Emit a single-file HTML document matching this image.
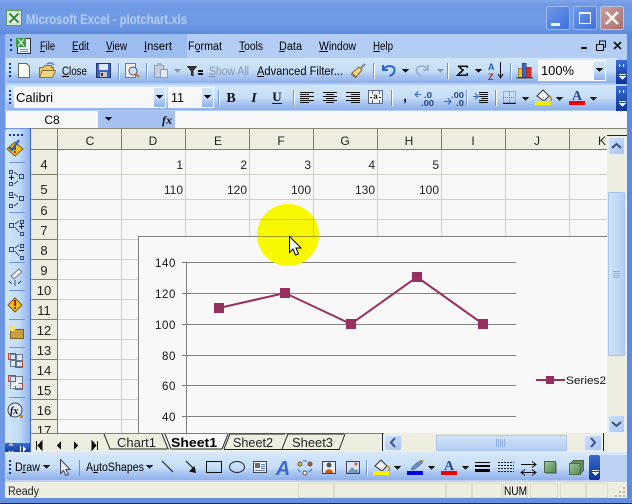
<!DOCTYPE html>
<html><head><meta charset="utf-8">
<style>
html,body{margin:0;padding:0;width:632px;height:504px;overflow:hidden;background:#3a6bd8}
svg{display:block}
text{font-family:"Liberation Sans",sans-serif;font-size:11px;fill:#000;white-space:pre}
.c{font-size:12px;fill:#222}
.g{font-size:11.5px;fill:#111}
.h{font-size:12px;fill:#222;text-anchor:middle}
.r{font-size:13px;fill:#222;text-anchor:middle}
</style></head>
<body>
<svg width="632" height="504" viewBox="0 0 632 504" xmlns="http://www.w3.org/2000/svg" shape-rendering="crispEdges">
<defs>
<linearGradient id="tb" x1="0" y1="0" x2="0" y2="1"><stop offset="0" stop-color="#d2e6f8"/><stop offset=".5" stop-color="#c6def6"/><stop offset=".72" stop-color="#a9c6f2"/><stop offset="1" stop-color="#8eb0ea"/></linearGradient>
<linearGradient id="title" x1="0" y1="0" x2="0" y2="1"><stop offset="0" stop-color="#7ea4ea"/><stop offset=".15" stop-color="#7099e4"/><stop offset=".7" stop-color="#6f9ae3"/><stop offset="1" stop-color="#5f8bdc"/></linearGradient>
<linearGradient id="lt" x1="0" y1="0" x2="1" y2="0"><stop offset="0" stop-color="#d2e6f8"/><stop offset=".55" stop-color="#c3dcf6"/><stop offset="1" stop-color="#8fb2ec"/></linearGradient>
<linearGradient id="chev" x1="0" y1="0" x2="0" y2="1"><stop offset="0" stop-color="#3a6cd0"/><stop offset="1" stop-color="#0a3496"/></linearGradient>
<linearGradient id="thumb" x1="0" y1="0" x2="0" y2="1"><stop offset="0" stop-color="#d2e6f8"/><stop offset="1" stop-color="#b4ccf4"/></linearGradient>
<linearGradient id="vthumb" x1="0" y1="0" x2="1" y2="0"><stop offset="0" stop-color="#d2e6f8"/><stop offset="1" stop-color="#b4ccf4"/></linearGradient>
<linearGradient id="btn" x1="0" y1="0" x2="1" y2="1"><stop offset="0" stop-color="#cfe0fa"/><stop offset="1" stop-color="#a9c4f2"/></linearGradient>
<linearGradient id="minb" x1="0" y1="0" x2="1" y2="1"><stop offset="0" stop-color="#7098e6"/><stop offset="1" stop-color="#3d6fdc"/></linearGradient>
<linearGradient id="clb" x1="0" y1="0" x2="1" y2="1"><stop offset="0" stop-color="#c9a09a"/><stop offset="1" stop-color="#ab6f6a"/></linearGradient>
<linearGradient id="grn" x1="0" y1="0" x2="1" y2="1"><stop offset="0" stop-color="#9cc79a"/><stop offset="1" stop-color="#4f8a4f"/></linearGradient>
<clipPath id="spot"><circle cx="288" cy="235" r="31"/></clipPath>
<path id="arr" d="M0 0h7l-3.500 4z"/>
</defs>

<!-- window frame -->
<rect width="632" height="504" fill="#3f72dc"/>
<rect x="0" y="0" width="632" height="34" fill="url(#title)"/>
<rect x="0" y="34" width="5" height="470" fill="#6d97e4"/>
<rect x="627" y="34" width="5" height="470" fill="#5c8ae0"/>
<rect x="0" y="498" width="632" height="6" fill="#6490e2"/>
<rect x="0" y="503" width="632" height="1" fill="#2a2a3a"/>

<!-- title -->
<rect x="6.500" y="10.500" width="15" height="15" fill="#d6e3d0" stroke="#5c9a5c"/>
<rect x="9" y="13" width="10" height="10" fill="#f4f8f0"/>
<path d="M9.500 13.500l9 9M18.500 13.500l-9 9" stroke="#2a8a3a" stroke-width="2" fill="none" shape-rendering="auto"/>
<text x="26" y="24" textLength="161" lengthAdjust="spacingAndGlyphs" style="font-size:13.500px;font-weight:bold;fill:#b5cef5">Microsoft Excel - plotchart.xls</text>

<!-- window buttons -->
<rect x="546.500" y="6.500" width="23" height="23" rx="2" fill="url(#minb)" stroke="#9cb9ee"/>
<rect x="551" y="23" width="9" height="3" fill="#eef4ff"/>
<rect x="573.500" y="6.500" width="23" height="23" rx="2" fill="url(#minb)" stroke="#9cb9ee"/>
<rect x="579.500" y="12.500" width="11" height="11" fill="none" stroke="#eef4ff"/>
<rect x="579" y="12" width="12" height="2" fill="#eef4ff"/>
<rect x="600.500" y="6.500" width="23" height="23" rx="2" fill="url(#clb)" stroke="#b9c5e6"/>
<path d="M606 12l12 12M618 12l-12 12" stroke="#f4f4f4" stroke-width="2.600" fill="none" shape-rendering="auto"/>

<!-- menu bar -->
<rect x="5" y="34" width="622" height="24" fill="#b4cdf5"/>
<rect x="5" y="34" width="182" height="24" fill="#9dbcf0"/>
<g fill="#0b3a9a"><rect x="10" y="39" width="2" height="2"/><rect x="10" y="44" width="2" height="2"/><rect x="10" y="49" width="2" height="2"/></g>
<path d="M17.500 38.500h13v15h-13z" fill="#e8eefa" stroke="#333"/><rect x="16" y="38" width="10" height="9" fill="#3d9a44"/>
<path d="M18 39l6 7m0-7l-6 7" stroke="#fff" fill="none" shape-rendering="auto"/>
<path d="M20 49.500h8M20 51.500h8" stroke="#7a8aa8"/>
<text x="40" y="50" textLength="15" lengthAdjust="spacingAndGlyphs" style="font-size:11.500px">File</text><rect x="40" y="51" width="5" height="1"/>
<text x="72" y="50" textLength="17" lengthAdjust="spacingAndGlyphs" style="font-size:11.500px">Edit</text><rect x="72" y="51" width="6" height="1"/>
<text x="106" y="50" textLength="21" lengthAdjust="spacingAndGlyphs" style="font-size:11.500px">View</text><rect x="106" y="51" width="7" height="1"/>
<text x="144" y="50" textLength="28" lengthAdjust="spacingAndGlyphs" style="font-size:11.500px">Insert</text><rect x="144" y="51" width="3" height="1"/>
<text x="188" y="50" textLength="34" lengthAdjust="spacingAndGlyphs" style="font-size:11.500px">Format</text><rect x="196" y="51" width="4" height="1"/>
<text x="239" y="50" textLength="24" lengthAdjust="spacingAndGlyphs" style="font-size:11.500px">Tools</text><rect x="239" y="51" width="6" height="1"/>
<text x="279" y="50" textLength="23" lengthAdjust="spacingAndGlyphs" style="font-size:11.500px">Data</text><rect x="279" y="51" width="6" height="1"/>
<text x="319" y="50" textLength="37" lengthAdjust="spacingAndGlyphs" style="font-size:11.500px">Window</text><rect x="319" y="51" width="9" height="1"/>
<text x="373" y="50" textLength="20" lengthAdjust="spacingAndGlyphs" style="font-size:11.500px">Help</text><rect x="373" y="51" width="7" height="1"/>
<rect x="581" y="47" width="6" height="2" fill="#111"/>
<path d="M596.500 44.500h7v6h-7zM599.500 44v-3h6v6h-2" fill="none" stroke="#111"/>
<path d="M614 42l7 7M621 42l-7 7" stroke="#111" stroke-width="1.600" fill="none" shape-rendering="auto"/>

<!-- toolbar 1 -->
<rect x="5" y="58" width="622" height="26" fill="#b4cdf5"/>
<rect x="6" y="58" width="612" height="25" rx="3" fill="url(#tb)"/>
<g fill="#0b3a9a"><rect x="9" y="63" width="2" height="2"/><rect x="9" y="67" width="2" height="2"/><rect x="9" y="71" width="2" height="2"/><rect x="9" y="75" width="2" height="2"/></g>
<!-- new -->
<path d="M18.500 63.500h8l3 3v11h-11z" fill="#fbfbf2" stroke="#6a6a5a"/>
<!-- open -->
<path d="M39.500 77.500v-10h4l1-2h7v2h2v3" fill="#e8c66a" stroke="#8a7030"/>
<path d="M39.500 77.500l3-7h13l-3 7z" fill="#f3d682" stroke="#8a7030"/>
<path d="M47 64c3-2 5-1 7 1" stroke="#4a78c8" fill="none" stroke-width="1.400" shape-rendering="auto"/>
<text x="62" y="75" textLength="25" lengthAdjust="spacingAndGlyphs" style="font-size:11.500px">Close</text><rect x="62" y="76" width="7" height="1"/>
<!-- save -->
<rect x="96.500" y="63.500" width="14" height="14" fill="#3e62c0" stroke="#23357a"/>
<rect x="99" y="64" width="9" height="6" fill="#dfe8f5"/>
<rect x="100" y="72" width="7" height="5" fill="#c8c8c8"/><rect x="101" y="73" width="2" height="3" fill="#333"/>
<rect x="118" y="63" width="1" height="16" fill="#6f93d4"/><rect x="119" y="63" width="1" height="16" fill="#fff"/>
<!-- preview -->
<path d="M125.500 63.500h10v14h-10z" fill="#f4f4ee" stroke="#7a7a70"/>
<circle cx="133" cy="71" r="4" fill="#cfe2f5" stroke="#556" shape-rendering="auto"/>
<path d="M136 74l3 3" stroke="#c8721a" stroke-width="2" shape-rendering="auto"/>
<rect x="146" y="63" width="1" height="16" fill="#6f93d4"/><rect x="147" y="63" width="1" height="16" fill="#fff"/>
<!-- paste grey -->
<path d="M154.500 65.500h9v12h-9z" fill="#c4d0de" stroke="#8c9cb4"/>
<rect x="157" y="63" width="5" height="3" fill="#a9b6c8"/>
<path d="M160.500 69.500h7v8h-7z" fill="#e2e8f0" stroke="#8c9cb4"/>
<use href="#arr" x="174" y="69" fill="#8a97ac"/>
<!-- filter -->
<path d="M187 66h10l-4 5v5l-2-1v-4z" fill="#333" stroke="#222" stroke-width=".5"/>
<rect x="198" y="70" width="5" height="2" fill="#111"/><rect x="198" y="73" width="5" height="2" fill="#111"/>
<text x="209" y="75" textLength="40" lengthAdjust="spacingAndGlyphs" style="font-size:11.500px;fill:#8494ac">Show All</text><rect x="209" y="76" width="6" height="1" fill="#8494ac"/>
<text x="257" y="75" textLength="86" lengthAdjust="spacingAndGlyphs" style="font-size:11.500px">Advanced Filter...</text><rect x="257" y="76" width="7" height="1"/>
<!-- brush -->
<path d="M352 73l7-6 3 3-6 7z" fill="#f0d890" stroke="#8a6a20" shape-rendering="auto"/>
<path d="M361 68l4-4" stroke="#7a8aa0" stroke-width="2.200" shape-rendering="auto"/>
<path d="M351 74l5 4" stroke="#8a6a20" shape-rendering="auto"/>
<rect x="373" y="63" width="1" height="16" fill="#6f93d4"/><rect x="374" y="63" width="1" height="16" fill="#fff"/>
<!-- undo -->
<path d="M383 65v5h5M383.500 69c3-4 11-4 11 1 0 3-2 5-5 6" fill="none" stroke="#2a64c8" stroke-width="2" shape-rendering="auto"/>
<use href="#arr" x="402" y="69" fill="#111"/>
<path d="M428 65v5h-5M427.500 69c-3-4-11-4-11 1 0 3 2 5 5 6" fill="none" stroke="#9fb4cf" stroke-width="2" shape-rendering="auto"/>
<use href="#arr" x="437" y="69" fill="#8a97ac"/>
<rect x="447" y="63" width="1" height="16" fill="#6f93d4"/><rect x="448" y="63" width="1" height="16" fill="#fff"/>
<!-- sigma -->
<path d="M458 66h9v2M458 66l5 4-5 5h9v-2" fill="none" stroke="#111" stroke-width="1.500"/>
<use href="#arr" x="475" y="69" fill="#111"/>
<!-- AZ -->
<text x="488" y="70" style="font-size:9px;font-weight:bold;fill:#2a5ab8">A</text>
<text x="488" y="80" style="font-size:9px;font-weight:bold;fill:#a03030">Z</text>
<path d="M500.500 62v15M498 74l2.500 4 2.500-4" stroke="#111" fill="none"/>
<rect x="510" y="63" width="1" height="16" fill="#6f93d4"/><rect x="511" y="63" width="1" height="16" fill="#fff"/>
<!-- chart icon -->
<rect x="518" y="68" width="4" height="9" fill="#e8c020" stroke="#444" stroke-width=".5"/>
<rect x="522" y="63" width="4" height="14" fill="#3a64c8" stroke="#334" stroke-width=".5"/>
<rect x="526" y="67" width="5" height="10" fill="#d03030" stroke="#444" stroke-width=".5"/>
<path d="M516 78h17" stroke="#444"/>
<!-- zoom combo -->
<rect x="538" y="60" width="67" height="21" fill="#f7f7f7"/>
<rect x="593" y="61" width="12" height="19" fill="url(#tb)"/>
<rect x="593.500" y="60.500" width="12" height="20" fill="none" stroke="#fff"/>
<use href="#arr" x="596" y="68" fill="#000"/>
<text x="541" y="75" textLength="33" lengthAdjust="spacingAndGlyphs" style="font-size:13px">100%</text>
<!-- chevron 1 -->
<rect x="616" y="60" width="11" height="24" fill="url(#chev)"/>
<path d="M619 64l2 1.500-2 1.500zM623 64l2 1.500-2 1.500z" fill="#fff"/><rect x="619" y="74" width="7" height="1" fill="#fff"/><use href="#arr" x="619" y="76" fill="#fff"/>

<!-- toolbar 2 -->
<rect x="5" y="84" width="622" height="27" fill="#b4cdf5"/>
<rect x="6" y="85" width="612" height="25" rx="3" fill="url(#tb)"/>
<g fill="#0b3a9a"><rect x="9" y="90" width="2" height="2"/><rect x="9" y="94" width="2" height="2"/><rect x="9" y="98" width="2" height="2"/><rect x="9" y="102" width="2" height="2"/></g>
<rect x="14" y="87" width="152" height="21" fill="#f7f7f7"/>
<rect x="153" y="88" width="12" height="19" fill="url(#tb)"/>
<rect x="153.500" y="87.500" width="12" height="20" fill="none" stroke="#fff"/>
<use href="#arr" x="156" y="95" fill="#000"/>
<text x="16" y="102" textLength="37" lengthAdjust="spacingAndGlyphs" style="font-size:12.500px">Calibri</text>
<rect x="168" y="87" width="46" height="21" fill="#f7f7f7"/>
<rect x="201" y="88" width="12" height="19" fill="url(#tb)"/>
<rect x="201.500" y="87.500" width="12" height="20" fill="none" stroke="#fff"/>
<use href="#arr" x="204" y="95" fill="#000"/>
<text x="171" y="102" textLength="13" lengthAdjust="spacingAndGlyphs" style="font-size:12.500px">11</text>
<rect x="218" y="90" width="1" height="16" fill="#6f93d4"/><rect x="219" y="90" width="1" height="16" fill="#fff"/>
<text x="231" y="102" text-anchor="middle" style="font-family:'Liberation Serif',serif;font-size:14px;font-weight:bold;fill:#111">B</text>
<text x="254" y="102" text-anchor="middle" style="font-family:'Liberation Serif',serif;font-size:14px;font-style:italic;font-weight:bold;fill:#111">I</text>
<text x="277" y="101" text-anchor="middle" style="font-family:'Liberation Serif',serif;font-size:13px;font-weight:bold;fill:#111">U</text><rect x="272" y="103" width="10" height="1" fill="#111"/>
<rect x="293" y="90" width="1" height="16" fill="#6f93d4"/><rect x="294" y="90" width="1" height="16" fill="#fff"/>
<path d="M300 92.500h14M300 94.500h9M300 96.500h14M300 98.500h9M300 100.500h14M300 102.500h9" stroke="#111"/>
<path d="M323 92.500h14M326 94.500h8M323 96.500h14M326 98.500h8M323 100.500h14M326 102.500h8" stroke="#111"/>
<path d="M346 92.500h14M351 94.500h9M346 96.500h14M351 98.500h9M346 100.500h14M351 102.500h9" stroke="#111"/>
<rect x="368.500" y="90.500" width="14" height="13" fill="#e9eef6" stroke="#5a6a80"/>
<rect x="369" y="94" width="13" height="6" fill="#fff"/>
<path d="M372.500 90v4M379.500 90v4M372.500 100v4M379.500 100v4" stroke="#5a6a80"/>
<text x="375.500" y="99" text-anchor="middle" style="font-size:8px;font-weight:bold;fill:#111">a</text>
<path d="M370 97.500h2M379 97.500h2" stroke="#111"/>
<rect x="391" y="90" width="1" height="16" fill="#6f93d4"/><rect x="392" y="90" width="1" height="16" fill="#fff"/>
<text x="405" y="101" text-anchor="middle" style="font-size:14px;font-weight:bold;fill:#111">,</text>
<!-- decimals -->
<text x="424" y="98" textLength="8" lengthAdjust="spacingAndGlyphs" style="font-size:8.500px;font-weight:bold;fill:#26447a">.0</text>
<text x="421" y="106" textLength="13" lengthAdjust="spacingAndGlyphs" style="font-size:8.500px;font-weight:bold;fill:#26447a">.00</text>
<path d="M421 94.500h-6M418 91.500l-3 3 3 3" stroke="#2f6ac8" fill="none" stroke-width="1.400"/>
<text x="451" y="98" textLength="13" lengthAdjust="spacingAndGlyphs" style="font-size:8.500px;font-weight:bold;fill:#26447a">.00</text>
<text x="456" y="106" textLength="8" lengthAdjust="spacingAndGlyphs" style="font-size:8.500px;font-weight:bold;fill:#26447a">.0</text>
<path d="M444 101.500h7M448 98.500l3 3-3 3" stroke="#2f6ac8" fill="none" stroke-width="1.400"/>
<rect x="466" y="90" width="1" height="16" fill="#6f93d4"/><rect x="467" y="90" width="1" height="16" fill="#fff"/>
<path d="M479 92.500h9M479 94.500h9M479 96.500h9M481 98.500h7M479 100.500h9M479 102.500h9" stroke="#111"/>
<path d="M473 96.500h5M475 93.500l3 3-3 3" stroke="#2f6ac8" fill="none" stroke-width="1.300"/>
<rect x="495" y="90" width="1" height="16" fill="#6f93d4"/><rect x="496" y="90" width="1" height="16" fill="#fff"/>
<path d="M503.500 91.500h12v11h-12zM509.500 91v11M503 97.500h12" fill="none" stroke="#6a7a90" stroke-dasharray="1 1"/>
<rect x="503" y="103" width="13" height="1" fill="#111"/>
<use href="#arr" x="522" y="97" fill="#111"/>
<!-- fill -->
<path d="M537 96l6-6 6 6-5 5z" fill="#f6f6f6" stroke="#333" shape-rendering="auto"/>
<path d="M549 96c2 1 3 3 2 5" stroke="#c09020" stroke-width="1.600" fill="none" shape-rendering="auto"/>
<rect x="535" y="101" width="16" height="4" fill="#f8f000"/>
<use href="#arr" x="556" y="97" fill="#111"/>
<!-- font color -->
<text x="577" y="100" text-anchor="middle" style="font-family:'Liberation Serif',serif;font-size:14px;font-weight:bold;fill:#26488c">A</text>
<rect x="569" y="101" width="16" height="4" fill="#f00000"/>
<use href="#arr" x="590" y="97" fill="#111"/>
<rect x="616" y="86" width="11" height="25" fill="url(#chev)"/>
<path d="M619 90l2 1.500-2 1.500zM623 90l2 1.500-2 1.500z" fill="#fff"/><rect x="619" y="101" width="7" height="1" fill="#fff"/><use href="#arr" x="619" y="103" fill="#fff"/>

<!-- name box row -->
<rect x="5" y="111" width="622" height="17" fill="#a5c1f1"/>
<rect x="6" y="111" width="92" height="17" fill="#f8f8f8"/>
<text x="52" y="124" text-anchor="middle" style="font-size:12px">C8</text>
<use href="#arr" x="105" y="117" fill="#111"/>
<text x="162" y="124" style="font-family:'Liberation Serif',serif;font-size:12px;font-style:italic;font-weight:bold;fill:#111">fx</text>
<rect x="175" y="111" width="452" height="17" fill="#f8f8f8"/>

<!-- sheet -->
<rect x="31" y="128" width="576" height="305" fill="#f8f8f8"/>
<rect x="31" y="128" width="596" height="1" fill="#8a8674"/>
<rect x="31" y="129" width="576" height="20" fill="#eeeee0"/>
<rect x="31" y="129" width="26" height="304" fill="#eeeee0"/>
<g fill="#7d7d66">
<rect x="31" y="149" width="576" height="1"/>
<rect x="57" y="129" width="1" height="304"/>
<rect x="121" y="129" width="1" height="20"/><rect x="185" y="129" width="1" height="20"/><rect x="249" y="129" width="1" height="20"/><rect x="313" y="129" width="1" height="20"/><rect x="377" y="129" width="1" height="20"/><rect x="441" y="129" width="1" height="20"/><rect x="505" y="129" width="1" height="20"/><rect x="569" y="129" width="1" height="20"/>
<rect x="31" y="174" width="26" height="1"/><rect x="31" y="199" width="26" height="1"/><rect x="31" y="219" width="26" height="1"/><rect x="31" y="239" width="26" height="1"/><rect x="31" y="259" width="26" height="1"/><rect x="31" y="279" width="26" height="1"/><rect x="31" y="299" width="26" height="1"/><rect x="31" y="319" width="26" height="1"/><rect x="31" y="339" width="26" height="1"/><rect x="31" y="359" width="26" height="1"/><rect x="31" y="379" width="26" height="1"/><rect x="31" y="399" width="26" height="1"/><rect x="31" y="419" width="26" height="1"/>
</g>
<g fill="#d0d0c4">
<rect x="58" y="174" width="549" height="1"/><rect x="58" y="199" width="549" height="1"/><rect x="58" y="219" width="549" height="1"/>
<rect x="58" y="239" width="80" height="1"/><rect x="58" y="259" width="80" height="1"/><rect x="58" y="279" width="80" height="1"/><rect x="58" y="299" width="80" height="1"/><rect x="58" y="319" width="80" height="1"/><rect x="58" y="339" width="80" height="1"/><rect x="58" y="359" width="80" height="1"/><rect x="58" y="379" width="80" height="1"/><rect x="58" y="399" width="80" height="1"/><rect x="58" y="419" width="80" height="1"/>
<rect x="121" y="150" width="1" height="283"/>
<rect x="185" y="150" width="1" height="86"/><rect x="249" y="150" width="1" height="86"/><rect x="313" y="150" width="1" height="86"/><rect x="377" y="150" width="1" height="86"/><rect x="441" y="150" width="1" height="86"/><rect x="505" y="150" width="1" height="86"/><rect x="569" y="150" width="1" height="86"/>
</g>
<text class="h" x="90" y="145">C</text><text class="h" x="153" y="145">D</text><text class="h" x="218" y="145">E</text><text class="h" x="281" y="145">F</text><text class="h" x="345" y="145">G</text><text class="h" x="409" y="145">H</text><text class="h" x="473" y="145">I</text><text class="h" x="537" y="145">J</text><text class="h" x="602" y="145">K</text>
<text class="r" x="44" y="169">4</text><text class="r" x="44" y="194">5</text><text class="r" x="44" y="215">6</text><text class="r" x="44" y="235">7</text><text class="r" x="44" y="255">8</text><text class="r" x="44" y="275">9</text><text class="r" x="44" y="295">10</text><text class="r" x="44" y="315">11</text><text class="r" x="44" y="335">12</text><text class="r" x="44" y="355">13</text><text class="r" x="44" y="375">14</text><text class="r" x="44" y="395">15</text><text class="r" x="44" y="415">16</text><text class="r" x="44" y="435">17</text>
<g text-anchor="end">
<text class="c" x="183" y="169">1</text><text class="c" x="247" y="169">2</text><text class="c" x="311" y="169">3</text><text class="c" x="375" y="169">4</text><text class="c" x="439" y="169">5</text>
<text class="c" x="183" y="194">110</text><text class="c" x="247" y="194">120</text><text class="c" x="311" y="194">100</text><text class="c" x="375" y="194">130</text><text class="c" x="439" y="194">100</text>
</g>

<!-- chart -->
<rect x="138" y="236" width="469" height="197" fill="#f8f8f8"/>
<rect x="138" y="236" width="469" height="1" fill="#808080"/>
<rect x="138" y="236" width="1" height="197" fill="#808080"/>
<g fill="#808080">
<rect x="182" y="262" width="334" height="1"/><rect x="182" y="293" width="334" height="1"/><rect x="182" y="324" width="334" height="1"/><rect x="182" y="355" width="334" height="1"/><rect x="182" y="385" width="334" height="1"/><rect x="182" y="416" width="334" height="1"/>
<rect x="186" y="262" width="1" height="171"/>
</g>
<g text-anchor="end" style="letter-spacing:.6px">
<text class="g" x="176" y="267">140</text><text class="g" x="176" y="298">120</text><text class="g" x="176" y="329">100</text><text class="g" x="176" y="360">80</text><text class="g" x="176" y="390">60</text><text class="g" x="176" y="421">40</text>
</g>
<polyline points="219,308 285,293 351,324 417,277 483,324" fill="none" stroke="#96305f" stroke-width="2" shape-rendering="auto"/>
<g fill="#96305f">
<rect x="214" y="303" width="10" height="10"/><rect x="280" y="288" width="10" height="10"/><rect x="346" y="319" width="10" height="10"/><rect x="412" y="272" width="10" height="10"/><rect x="478" y="319" width="10" height="10"/>
<rect x="536" y="379" width="29" height="2"/><rect x="546" y="376" width="8" height="8"/>
</g>
<text x="566" y="384" textLength="40" lengthAdjust="spacingAndGlyphs" style="font-size:11px;fill:#111">Series2</text>

<!-- highlight + cursor -->
<circle cx="288" cy="235" r="31" fill="#f8f800" shape-rendering="auto"/>
<g clip-path="url(#spot)">
<rect x="257" y="219" width="62" height="1" fill="#d0d000"/>
<rect x="257" y="236" width="62" height="1" fill="#a0a020"/>
<rect x="313" y="204" width="1" height="32" fill="#d0d000"/>
</g>
<path d="M289.500 236.500v16l3.500-3.500 2.500 6 3-1.200-2.500-5.800h5z" fill="#fff" stroke="#000" shape-rendering="auto"/>

<!-- left toolbar -->
<rect x="5" y="128" width="26" height="326" fill="#6d97e4"/>
<rect x="5" y="129" width="25" height="324" rx="3" fill="url(#lt)"/>
<rect x="30" y="128" width="1" height="326" fill="#3a6ad0"/>
<g fill="#0b3a9a"><rect x="9" y="134" width="2" height="2"/><rect x="13" y="134" width="2" height="2"/><rect x="17" y="134" width="2" height="2"/><rect x="21" y="134" width="2" height="2"/></g>
<g fill="#6f93d4"><rect x="9" y="162" width="16" height="1"/><rect x="9" y="212" width="16" height="1"/><rect x="9" y="262" width="16" height="1"/><rect x="9" y="290" width="16" height="1"/><rect x="9" y="319" width="16" height="1"/><rect x="9" y="347" width="16" height="1"/><rect x="9" y="397" width="16" height="1"/></g>
<!-- check warn -->
<path d="M15 142l8 7-8 7-8-7z" fill="#f2c020" stroke="#7a5a10" shape-rendering="auto"/>
<rect x="14" y="145" width="2" height="5" fill="#c02020"/><rect x="14" y="151" width="2" height="2" fill="#c02020"/>
<path d="M9 147l3 3 7-10" stroke="#2a5ac0" stroke-width="2.200" fill="none" shape-rendering="auto"/>
<!-- trace precedents -->
<g fill="none" stroke="#334a70">
<rect x="9.500" y="170.500" width="3" height="3"/><rect x="9.500" y="182.500" width="3" height="3"/><rect x="19.500" y="174.500" width="4" height="4"/>
<path d="M14 172l4 3M14 184l4-3"/>
<rect x="9.500" y="192.500" width="3" height="3"/><rect x="9.500" y="204.500" width="3" height="3"/><rect x="19.500" y="196.500" width="4" height="4"/>
<path d="M14 194l4 3M14 206l4-3"/>
<rect x="9.500" y="223.500" width="4" height="4"/><rect x="20.500" y="220.500" width="3" height="3"/><rect x="20.500" y="232.500" width="3" height="3"/>
<path d="M15 224l4-3M15 227l4 5"/>
<rect x="9.500" y="247.500" width="4" height="4"/><rect x="20.500" y="244.500" width="3" height="3"/><rect x="20.500" y="256.500" width="3" height="3"/>
<path d="M15 248l4-3M15 251l4 5"/>
</g>
<path d="M9 177.500h5M11.500 175v5M9 197.500h5M19 226.500h5M21.500 224v5M19 250.500h5" stroke="#111" fill="none"/>
<!-- eraser -->
<path d="M11 276l8-7 3 3-8 7z" fill="#eef0f6" stroke="#6a7a90" shape-rendering="auto"/>
<path d="M9 281l3 3M21 281l-3 3M15 280v6" stroke="#334a70" fill="none"/>
<!-- warn -->
<path d="M15 298l7 7-7 7-7-7z" fill="#f2c020" stroke="#7a5a10" shape-rendering="auto"/>
<rect x="14" y="300" width="2" height="6" fill="#c02020"/><rect x="14" y="307" width="2" height="2" fill="#c02020"/>
<!-- comment -->
<rect x="10.500" y="329.500" width="13" height="9" fill="#c8a040" stroke="#7a6420"/>
<rect x="9" y="326" width="6" height="5" fill="#f6e070"/>
<!-- trace boxes -->
<g fill="#dfe6f2" stroke="#6a7a90"><rect x="10.500" y="354.500" width="12" height="12"/></g>
<path d="M10 360.500h13M16.500 354v13" stroke="#6a7a90"/>
<rect x="8.500" y="353.500" width="7" height="6" fill="none" stroke="#d04020"/><rect x="15.500" y="361.500" width="7" height="6" fill="none" stroke="#d04020"/>
<g fill="#dfe6f2" stroke="#6a7a90"><rect x="10.500" y="376.500" width="12" height="12"/></g>
<rect x="8.500" y="375.500" width="7" height="6" fill="none" stroke="#d04020"/><rect x="15.500" y="383.500" width="7" height="6" fill="none" stroke="#d04020"/>
<path d="M11 388l9-7" stroke="#f8f8f8" stroke-width="2" shape-rendering="auto"/>
<!-- fx magnifier -->
<circle cx="15" cy="410" r="7" fill="#dfe8f4" stroke="#445" shape-rendering="auto"/>
<text x="10" y="414" style="font-family:'Liberation Serif',serif;font-size:10px;font-style:italic;font-weight:bold;fill:#111">fx</text>
<rect x="20" y="415" width="3" height="3" fill="#c8861a"/>
<!-- toolbar foot -->
<rect x="5" y="443" width="25" height="11" fill="url(#chev)"/>
<path d="M9 446l2-2 2 2M9 451l2 2 2-2" stroke="#fff" fill="none"/>
<rect x="20" y="446" width="1" height="6" fill="#fff"/><path d="M23 446l3 3-3 3z" fill="#fff"/>

<!-- tabs -->
<rect x="31" y="433" width="596" height="19" fill="#eeeee0"/>
<rect x="31" y="433" width="353" height="1" fill="#808070"/>
<path d="M36.500 441v9M42 441l-4 4.500 4 4.500z" fill="#111" stroke="#111"/>
<path d="M61 441l-4 4.500 4 4.500z" fill="#111"/><path d="M74 441l4 4.500-4 4.500z" fill="#111"/>
<path d="M92 441l4 4.500-4 4.500zM97.500 441v9" fill="#111" stroke="#111"/>
<path d="M104 434l6 15h57" fill="none" stroke="#222" shape-rendering="auto"/>
<path d="M162 434l6 15 h1" fill="none" stroke="#222" shape-rendering="auto"/>
<text x="117" y="447" textLength="39" lengthAdjust="spacingAndGlyphs" style="font-size:13px;fill:#222">Chart1</text>
<path d="M165 434l6 15h51l6-15" fill="#f8f8f8" stroke="#222" shape-rendering="auto"/>
<text x="171" y="447" textLength="46" lengthAdjust="spacingAndGlyphs" style="font-size:13px;font-weight:bold">Sheet1</text>
<path d="M224 449l6-15h55" fill="none" stroke="#222" shape-rendering="auto"/><rect x="224" y="449" width="58" height="1" fill="#222"/>
<text x="233" y="447" textLength="40" lengthAdjust="spacingAndGlyphs" style="font-size:13px;fill:#222">Sheet2</text>
<path d="M282 449l6-15h56" fill="none" stroke="#222" shape-rendering="auto"/><rect x="282" y="449" width="57" height="1" fill="#222"/>
<text x="292" y="447" textLength="41" lengthAdjust="spacingAndGlyphs" style="font-size:13px;fill:#222">Sheet3</text>
<path d="M339 450l6-16" stroke="#222" shape-rendering="auto"/>
<rect x="382" y="433" width="1" height="18" fill="#222"/>
<!-- h scroll -->
<rect x="384.500" y="435.500" width="17" height="15" rx="1" fill="url(#btn)" stroke="#e6f0fc"/>
<path d="M395 438l-4 4.500 4 4.500" fill="none" stroke="#37537f" stroke-width="2" shape-rendering="auto"/>
<rect x="436.500" y="435.500" width="130" height="15" rx="1" fill="url(#thumb)" stroke="#a9c4f2"/>
<path d="M498.500 439v8M500.500 439v8M502.500 439v8M504.500 439v8M496.500 439v8" stroke="#8fb0e0"/>
<rect x="584.500" y="435.500" width="17" height="15" rx="1" fill="url(#btn)" stroke="#e6f0fc"/>
<path d="M591 438l4 4.500-4 4.500" fill="none" stroke="#37537f" stroke-width="2" shape-rendering="auto"/>
<rect x="603" y="433" width="1" height="18" fill="#222"/>
<rect x="608" y="433" width="19" height="19" fill="#f0f0e4"/>
<!-- v scroll -->
<rect x="607" y="129" width="20" height="304" fill="#eeeee0"/>
<rect x="607" y="135" width="20" height="1" fill="#222"/>
<rect x="608.500" y="137.500" width="16" height="17" rx="1" fill="url(#btn)" stroke="#e6f0fc"/>
<path d="M612 148l4.500-4 4.500 4" fill="none" stroke="#37537f" stroke-width="2" shape-rendering="auto"/>
<rect x="608.500" y="192.500" width="16" height="163" rx="1" fill="url(#vthumb)" stroke="#a9c4f2"/>
<path d="M613 271.500h7M613 273.500h7M613 275.500h7M613 277.500h7" stroke="#8fb0e0"/>
<rect x="608.500" y="415.500" width="16" height="17" rx="1" fill="url(#btn)" stroke="#e6f0fc"/>
<path d="M612 422l4.500 4 4.500-4" fill="none" stroke="#37537f" stroke-width="2" shape-rendering="auto"/>

<!-- drawing toolbar -->
<rect x="5" y="452" width="622" height="3" fill="#d8e8fa"/>
<rect x="5" y="455" width="622" height="27" fill="#bcd3f6"/>
<rect x="6" y="455" width="590" height="25" rx="3" fill="url(#tb)"/>
<g fill="#0b3a9a"><rect x="9" y="460" width="2" height="2"/><rect x="9" y="464" width="2" height="2"/><rect x="9" y="468" width="2" height="2"/><rect x="9" y="472" width="2" height="2"/></g>
<text x="15" y="471" textLength="25" lengthAdjust="spacingAndGlyphs" style="font-size:11.500px">Draw</text><rect x="22" y="472" width="4" height="1"/>
<use href="#arr" x="43" y="465" fill="#111"/>
<path d="M60.500 459.500v14l3-3 2.500 5 2.500-1-2.500-5h4z" fill="#e6eefa" stroke="#445" shape-rendering="auto"/>
<rect x="79" y="460" width="1" height="16" fill="#6f93d4"/>
<text x="86" y="471" textLength="58" lengthAdjust="spacingAndGlyphs" style="font-size:11.500px">AutoShapes</text><rect x="93" y="472" width="5" height="1"/>
<use href="#arr" x="146" y="465" fill="#111"/>
<path d="M162 461l11 11" stroke="#222" stroke-width="1.200" shape-rendering="auto"/>
<path d="M186 461l9 9" stroke="#222" stroke-width="1.200" shape-rendering="auto"/>
<path d="M196 473l-1.500-7-5.500 5.500z" fill="#111" shape-rendering="auto"/>
<rect x="206.500" y="461.500" width="15" height="11" fill="none" stroke="#111"/>
<ellipse cx="237" cy="467" rx="7.500" ry="5.500" fill="none" stroke="#223" shape-rendering="auto"/>
<rect x="253.500" y="461.500" width="13" height="11" fill="#f4f6fb" stroke="#445"/>
<rect x="255" y="463" width="5" height="5" fill="#111" opacity=".6"/>
<path d="M261 464.500h4M261 466.500h4M261 468.500h4M255 470.500h10" stroke="#5a7ab8"/>
<text x="283" y="475" text-anchor="middle" style="font-family:'Liberation Sans',sans-serif;font-size:20px;font-weight:bold;font-style:italic;fill:#3a6ad0">A</text>
<circle cx="300" cy="464" r="2" fill="#e8c020" stroke="#555" shape-rendering="auto"/><circle cx="310" cy="464" r="2" fill="#d05020" stroke="#555" shape-rendering="auto"/><circle cx="305" cy="473" r="2" fill="#f4f4f4" stroke="#555" shape-rendering="auto"/>
<path d="M303 461h4M298 469l2 3M312 469l-3 3" stroke="#3a6ac0" fill="none" shape-rendering="auto"/>
<!-- diagram / clipart / picture -->
<rect x="322.500" y="461.500" width="13" height="12" fill="#e8eef8" stroke="#445"/>
<circle cx="329" cy="465" r="2.500" fill="#555" shape-rendering="auto"/><path d="M325 473c0-5 8-5 8 0z" fill="#c8601a" shape-rendering="auto"/>
<rect x="346.500" y="461.500" width="13" height="12" fill="#d8e4f4" stroke="#445"/>
<path d="M347 473l5-6 3 3 2-1 2 4z" fill="#7a94bc" shape-rendering="auto"/><circle cx="356" cy="464" r="1.500" fill="#d06030" shape-rendering="auto"/>
<rect x="366" y="460" width="1" height="16" fill="#6f93d4"/><rect x="367" y="460" width="1" height="16" fill="#fff"/>
<!-- fill -->
<path d="M375 466l6-6 6 6-5 5z" fill="#f6f6f6" stroke="#333" shape-rendering="auto"/>
<path d="M387 466c2 1 3 3 2 5" stroke="#c09020" stroke-width="1.600" fill="none" shape-rendering="auto"/>
<rect x="373" y="471" width="16" height="4" fill="#f8f000"/>
<use href="#arr" x="394" y="466" fill="#111"/>
<!-- line color -->
<path d="M411 469c2-4 7-7 11-9l1 2c-3 3-6 6-10 8z" fill="#6a8cc8" stroke="#345" stroke-width=".5" shape-rendering="auto"/>
<rect x="422" y="460" width="2" height="2" fill="#e8c020"/>
<rect x="407" y="471" width="16" height="4" fill="#0000e8"/>
<use href="#arr" x="428" y="466" fill="#111"/>
<!-- font color -->
<text x="449" y="470" text-anchor="middle" style="font-family:'Liberation Serif',serif;font-size:14px;font-weight:bold;fill:#26488c">A</text>
<rect x="441" y="471" width="16" height="4" fill="#f00000"/>
<use href="#arr" x="462" y="466" fill="#111"/>
<!-- line style -->
<rect x="475" y="462" width="15" height="1" fill="#000"/><rect x="475" y="465" width="15" height="2" fill="#000"/><rect x="475" y="469" width="15" height="3" fill="#000"/>
<path d="M498 462.500h16M498 465.500h16M498 468.500h16M498 471.500h16" stroke="#222" stroke-dasharray="2 1"/>
<path d="M521 464.500h14M532 461.500l4 3-4 3M521 472.500h14M525 469.500l-4 3 4 3M532 469.500l4 3-4 3" fill="none" stroke="#111"/>
<!-- shadow + 3d -->
<rect x="546" y="463" width="11" height="11" fill="#555" opacity=".5"/>
<rect x="544.500" y="461.500" width="11" height="11" fill="url(#grn)" stroke="#4a6a4a"/>
<path d="M570.500 463.500l3-3h10v10l-3 3z" fill="#6a8a6a" stroke="#4a6a4a"/>
<rect x="569.500" y="463.500" width="11" height="11" fill="url(#grn)" stroke="#4a6a4a"/>
<rect x="589" y="455" width="11" height="25" rx="2" fill="url(#chev)"/>
<rect x="592" y="470" width="7" height="1" fill="#fff"/><use href="#arr" x="592" y="472" fill="#fff"/>

<!-- status bar -->
<rect x="5" y="482" width="622" height="16" fill="#eeeee0"/>
<text x="8" y="495" textLength="31" lengthAdjust="spacingAndGlyphs" style="font-size:11.500px;fill:#222">Ready</text>
<g fill="none" stroke="#dcdccc">
<rect x="298.500" y="483.500" width="35" height="14"/>
<rect x="334.500" y="483.500" width="111" height="14"/><rect x="446.500" y="483.500" width="25" height="14"/><rect x="472.500" y="483.500" width="29" height="14"/><rect x="503.500" y="483.500" width="24" height="14"/><rect x="530.500" y="483.500" width="27" height="14"/><rect x="560.500" y="483.500" width="25" height="14"/><rect x="586.500" y="483.500" width="21" height="14"/>
</g>
<text x="504" y="495" textLength="23" lengthAdjust="spacingAndGlyphs" style="font-size:11.500px">NUM</text>
<g fill="#b8b8a8"><rect x="623" y="487" width="2" height="2"/><rect x="619" y="491" width="2" height="2"/><rect x="623" y="491" width="2" height="2"/><rect x="615" y="495" width="2" height="2"/><rect x="619" y="495" width="2" height="2"/><rect x="623" y="495" width="2" height="2"/></g>
</svg>
</body></html>
